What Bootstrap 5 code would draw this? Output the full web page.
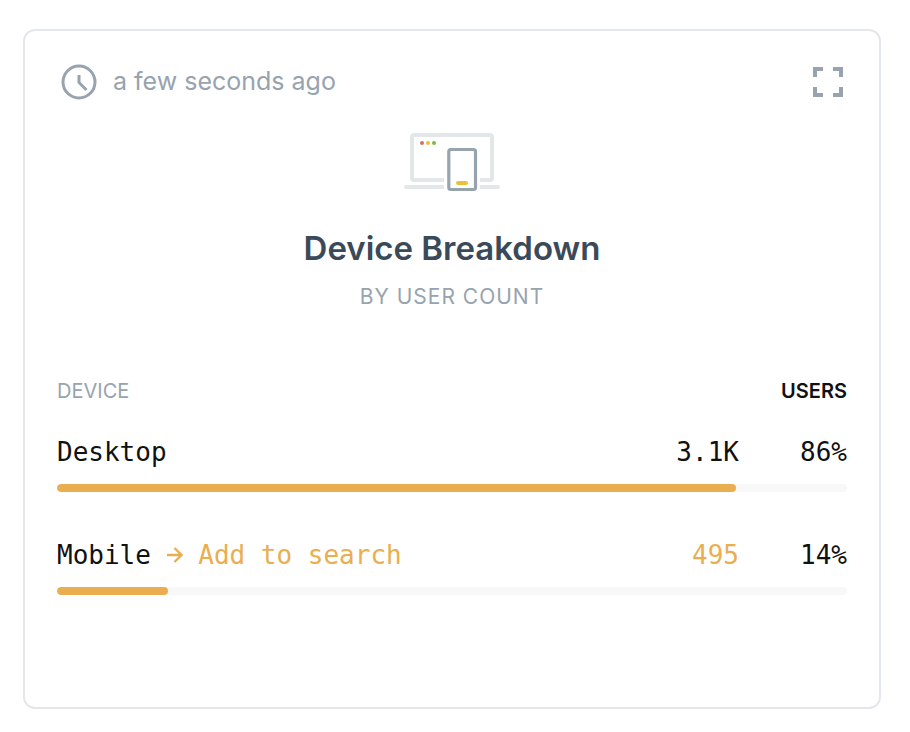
<!DOCTYPE html>
<html lang="en">
<head>
<meta charset="utf-8">
<meta name="viewport" content="width=device-width, initial-scale=1">
<title>Device Breakdown</title>
<link rel="stylesheet" href="https://cdn.jsdelivr.net/npm/bootstrap@5.3.0/dist/css/bootstrap.min.css">
<style>
  body { font-family: Inter, "Liberation Sans", sans-serif; background: #fff; color: #111; }
  .page { padding: 29px 29px 23px 23px; min-height: 100vh; }
  .widget { border: 2px solid #e4e7eb; border-radius: 12px; padding: 31px 32px; background: #fff; }
  .slate { color: #97a3ae; }
  .stamp { font-size: 25px; line-height: 36px; gap: 14px; padding-left: 2px; }
  .stamp span { padding-bottom: 2px; }
  .icon-btn { color: #97a3ae; line-height: 0; }
  .hero { padding-top: 29px; margin-bottom: 68px; }
  .title { font-size: 33px; line-height: 40px; font-weight: 600; color: #3b4a59; margin: 33px 0 15px; }
  .subtitle { font-size: 21px; line-height: 28px; letter-spacing: 1px; }
  .breakdown { table-layout: fixed; }
  .breakdown th, .breakdown td { padding: 0; }
  .breakdown thead th { font-size: 20px; line-height: 24px; padding-bottom: 31px; }
  .reading > * { font-family: "DejaVu Sans Mono", "Liberation Mono", monospace; font-size: 26px; line-height: 36px; font-weight: 400; white-space: nowrap; }
  .col-number { width: 108px; }
  .amber, .amber:hover { color: #eaae50; }
  .meter { height: 8px; margin: 14px 0 45px; border-radius: 4px; background: #f8f8f9; }
  .meter .progress-bar { border-radius: 4px; background: #eaae50; }
</style>
<script src="https://cdn.jsdelivr.net/npm/bootstrap@5.3.0/dist/js/bootstrap.bundle.min.js"></script>
</head>
<body>
<main class="page d-flex flex-column">
  <section class="widget flex-grow-1">
    <header class="d-flex justify-content-between align-items-center">
      <div class="stamp slate d-flex align-items-center">
        <svg width="40" height="40" viewBox="0 0 40 40" fill="none" stroke="currentColor" stroke-width="3" aria-hidden="true">
          <circle cx="20" cy="20" r="16"/>
          <path d="M20 13v7.5l7.5 7.5"/>
        </svg>
        <span>a few seconds ago</span>
      </div>
      <button type="button" class="icon-btn btn border-0 p-1" aria-label="Expand">
        <svg width="30" height="30" viewBox="0 0 30 30" fill="none" stroke="currentColor" stroke-width="4" aria-hidden="true">
          <path d="M2 10V2h8M20 2h8v8M28 20v8h-8M10 28H2v-8"/>
        </svg>
      </button>
    </header>

    <div class="hero text-center">
      <svg class="d-block mx-auto" width="96" height="64" viewBox="0 0 96 64" fill="none" aria-hidden="true">
        <rect x="8" y="4" width="80" height="45" rx="2" stroke="#e4e7ea" stroke-width="4"/>
        <path d="M2 56h92" stroke="#e4e7ea" stroke-width="4" stroke-linecap="round"/>
        <path d="M40 44h36v16H40z" fill="#fff"/>
        <rect x="44.8" y="18.5" width="26.7" height="40" rx="2" fill="#fff" stroke="#97a3ae" stroke-width="3.2"/>
        <path d="M54 52h8" stroke="#ecc03d" stroke-width="4" stroke-linecap="round"/>
        <circle cx="18" cy="12" r="2" fill="#dc6b67"/>
        <circle cx="24" cy="12" r="2" fill="#edbe40"/>
        <circle cx="30" cy="12" r="2" fill="#7fba42"/>
      </svg>
      <h1 class="title">Device Breakdown</h1>
      <p class="subtitle slate text-uppercase mb-0">By user count</p>
    </div>

    <table class="breakdown w-100">
      <colgroup><col><col class="col-number"><col class="col-number"></colgroup>
      <thead>
        <tr>
          <th scope="col" class="slate fw-normal">DEVICE</th>
          <th scope="col" colspan="2" class="text-end fw-semibold">USERS</th>
        </tr>
      </thead>
      <tbody>
        <tr class="reading">
          <th scope="row">Desktop</th>
          <td class="text-end">3.1K</td>
          <td class="text-end">86%</td>
        </tr>
        <tr>
          <td colspan="3">
            <div class="meter progress" role="progressbar" aria-label="Desktop users" aria-valuenow="86" aria-valuemin="0" aria-valuemax="100">
              <div class="progress-bar" style="width: 86%"></div>
            </div>
          </td>
        </tr>
        <tr class="reading">
          <th scope="row">Mobile <a href="#" class="amber text-decoration-none"><svg width="16" height="18" viewBox="0 0 16 18" fill="none" stroke="currentColor" stroke-width="2.4" class="align-baseline" aria-hidden="true"><path d="M0 9h14M7.5 2l7 7-7 7"/></svg> Add to search</a></th>
          <td class="amber text-end">495</td>
          <td class="text-end">14%</td>
        </tr>
        <tr>
          <td colspan="3">
            <div class="meter progress" role="progressbar" aria-label="Mobile users" aria-valuenow="14" aria-valuemin="0" aria-valuemax="100">
              <div class="progress-bar" style="width: 14%"></div>
            </div>
          </td>
        </tr>
      </tbody>
    </table>
  </section>
</main>
</body>
</html>
